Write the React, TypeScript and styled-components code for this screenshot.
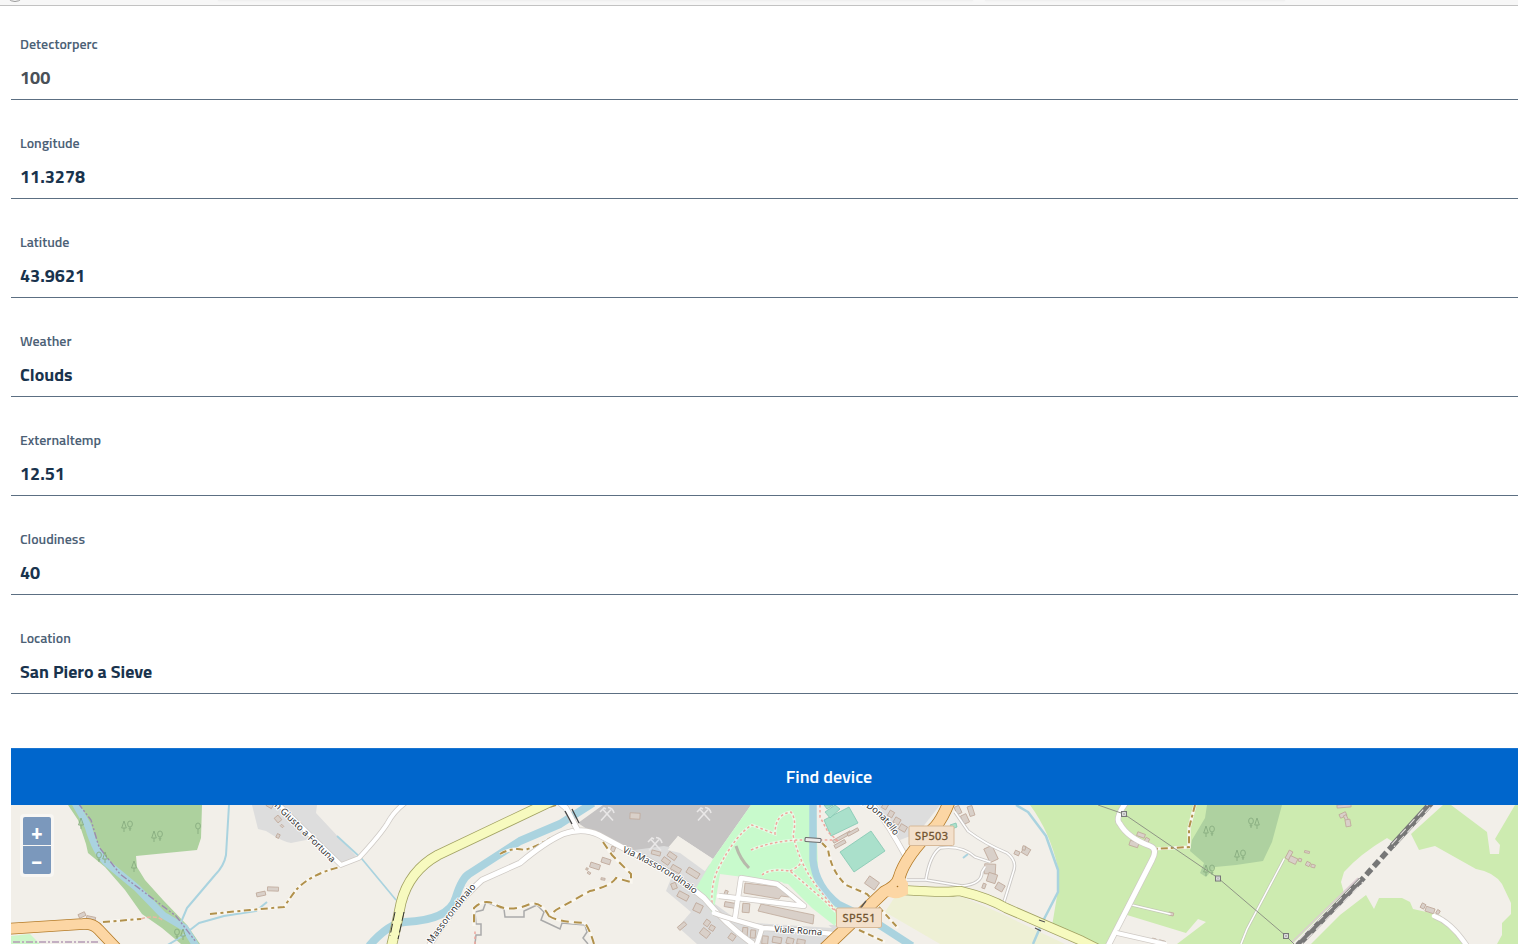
import React from "react";
import styled, { createGlobalStyle } from "styled-components";

const GlobalStyle = createGlobalStyle`
  *, *::before, *::after { box-sizing: border-box; }
  html, body { margin: 0; padding: 0; background: #fff; }
  body { height: 944px; overflow: hidden; font-family: "Titillium Web", "Noto Sans", sans-serif; }
`;

const Screen = styled.div`
  display: flex;
  flex-direction: column;
  height: 944px;
  overflow: hidden;
`;

const BrowserEdge = styled.header`
  display: flex;
  flex: none;
  height: 6px;
  background: #f7f7f7;
  border-bottom: 1px solid #c2c2c2;
  padding-left: 5px;
  overflow: hidden;
`;

const EdgeCircle = styled.span`
  width: 20px;
  height: 20px;
  margin-top: -18px;
  border: 1px solid #999;
  border-radius: 50%;
`;

const EdgeField = styled.span<{ $width: number; $gap: number }>`
  width: ${(p) => p.$width}px;
  height: 1px;
  margin-left: ${(p) => p.$gap}px;
  background: #f0f0f0;
  box-shadow: 0 0 2px #ececec;
`;

const Form = styled.main`
  display: flex;
  flex-direction: column;
  flex: 1;
  min-height: 0;
  padding-left: 11px;
`;

const Field = styled.div`
  display: flex;
  flex-direction: column;
  justify-content: flex-end;
  flex: none;
  height: 99px;
  border-bottom: 1px solid #5c6f82;
  padding: 0 9px 9px;
  &:first-child { height: 94px; }
`;

const Label = styled.label`
  font-size: 14px;
  line-height: 20px;
  font-weight: 600;
  color: #4c6176;
  margin-bottom: 12px;
`;

const Value = styled.div<{ $muted?: boolean }>`
  font-size: 18px;
  line-height: 24px;
  font-weight: 700;
  color: ${(p) => (p.$muted ? "#495057" : "#19334d")};
`;

const FindButton = styled.button`
  flex: none;
  height: 57px;
  margin-top: 54px;
  padding: 0 0 0 129px;
  border: 0;
  border-top: 1px solid #1a75d1;
  background: #0066cc;
  color: #fff;
  font: 600 18px/24px "Titillium Web", "Noto Sans", sans-serif;
`;

const MapFrame = styled.section`
  position: relative;
  flex: none;
  height: 139px;
  overflow: hidden;
  background: #f2efe9;
  svg { display: block; }
`;

const ZoomControl = styled.div`
  position: absolute;
  top: 9px;
  left: 9px;
  display: flex;
  flex-direction: column;
  gap: 1px;
  padding: 3px;
  border-radius: 4px;
  background: rgba(255, 255, 255, 0.45);
`;

const ZoomButton = styled.button<{ $end: "top" | "bottom" }>`
  display: flex;
  align-items: center;
  justify-content: center;
  width: 28px;
  height: 28px;
  padding: 0;
  border: 0;
  border-radius: ${(p) => (p.$end === "top" ? "2px 2px 0 0" : "0 0 2px 2px")};
  background: #7b98bc;
  color: #fff;
  font: 700 21px/20px "Titillium Web", "Noto Sans", sans-serif;
`;

const fields = [
  { label: "Detectorperc", value: "100", muted: true },
  { label: "Longitude", value: "11.3278" },
  { label: "Latitude", value: "43.9621" },
  { label: "Weather", value: "Clouds" },
  { label: "Externaltemp", value: "12.51" },
  { label: "Cloudiness", value: "40" },
  { label: "Location", value: "San Piero a Sieve" },
];

type RoadProps = { d: string; w: number; fill?: string; edge?: string; edgeWidth?: number };

const Road = ({ d, w, fill = "#fff", edge = "#cfcac5", edgeWidth = 1.4 }: RoadProps) => (
  <g fill="none" strokeLinejoin="round">
    <path d={d} stroke={edge} strokeWidth={w + edgeWidth} />
    <path d={d} stroke={fill} strokeWidth={w} strokeLinecap="round" />
  </g>
);

const Track = ({ d, dash = "7 3.5 3 3.5" }: { d: string; dash?: string }) => (
  <g fill="none">
    <path d={d} stroke="#faf7f0" strokeWidth="3.2" />
    <path d={d} stroke="#b1914c" strokeWidth="2" strokeDasharray={dash} />
  </g>
);

const Trees = ({ x, y, flip }: { x: number; y: number; flip?: boolean }) => (
  <g
    transform={`translate(${x} ${y})${flip ? " scale(-1 1)" : ""}`}
    fill="none"
    stroke="#88ad80"
    strokeWidth="0.9"
  >
    <path d="M-3 -5 L-5.3 2 H-0.7 Z M-3 2 V6" />
    <ellipse cx="3" cy="-2" rx="2.4" ry="3" />
    <path d="M3 1 V5 M1.6 2.3 L3 3.2 L4.4 2.3" />
  </g>
);

const Hammers = ({ x, y }: { x: number; y: number }) => (
  <g transform={`translate(${x} ${y})`} fill="none" stroke="#e9e7e7" strokeWidth="1.6">
    <path d="M-6 6.5 L4 -4.5 M6 6.5 L-4 -4.5" />
    <path d="M-7 -2 L-3 -6 L-1 -5 M1 -6.5 Q6 -6 7 -1" />
  </g>
);

const Pylon = ({ x, y }: { x: number; y: number }) => (
  <g transform={`translate(${x} ${y})`}>
    <rect x="-2.5" y="-2.5" width="5" height="5" fill="#ddd" stroke="#777" />
    <path d="M-1.5 -1.5 L1.5 1.5 M1.5 -1.5 L-1.5 1.5" stroke="#999" strokeWidth="0.5" />
  </g>
);

const Shield = ({ x, y, text }: { x: number; y: number; text: string }) => (
  <g>
    <rect x={x} y={y} width="45" height="19.5" rx="1.5" fill="#f3e0cb" stroke="#d7b998" />
    <text
      x={x + 22.5}
      y={y + 13.9}
      textAnchor="middle"
      fontSize="11"
      textLength="33"
      fill="#70532f"
      stroke="#70532f"
      strokeWidth="0.3"
    >
      {text}
    </text>
  </g>
);

/* x, y, width, height, rotation */
const buildings: [number, number, number, number, number][] = [
  [278, 819, 6, 5, 50], [282, 826, 3, 2, 45], [278, 836, 3, 4, 25], [270, 805, 6, 5, 30],
  [261, 894, 9, 4, -12], [273, 889, 11, 4, 2], [82, 915, 7, 4, -25], [91, 918, 9, 3, 12],
  [635, 816, 10, 6, 3], [595, 866, 10, 5, 18], [606, 861, 9, 5, 18], [589, 873, 3, 2, 30],
  [587, 869, 2, 2, 20], [603, 879, 4, 2, 10], [613, 849, 4, 5, 20],
  [656, 853, 9, 4, 15], [672, 856, 9, 5, 35], [666, 861, 8, 5, 35], [676, 869, 10, 5, 30],
  [693, 873, 13, 6, 32], [674, 886, 5, 6, -20], [683, 896, 11, 6, 28], [698, 908, 8, 8, 25],
  [682, 926, 9, 4, -40], [707, 923, 5, 6, 35], [705, 933, 9, 7, 38], [712, 928, 5, 5, 30],
  [746, 908, 7, 9, 5], [730, 905, 11, 5, 10], [726, 893, 3, 5, 20],
  [745, 932, 5, 9, 5], [753, 934, 5, 8, 5], [777, 940, 9, 6, 10], [790, 941, 7, 6, 15],
  [801, 942, 8, 5, 10], [765, 940, 6, 8, 5], [732, 937, 6, 6, 35],
  [885, 806, 5, 6, 30], [891, 814, 5, 6, 30], [897, 821, 6, 6, 30], [903, 828, 7, 6, 30],
  [842, 837, 20, 3, -29], [840, 844, 12, 3.5, -29], [853, 832, 12, 3, -29],
  [872, 883, 12, 9, 35], [958, 810, 5, 8, -25], [965, 819, 6, 9, -25], [971, 811, 5, 10, -18],
  [991, 854, 9, 15, -25], [990, 869, 11, 10, 3], [992, 878, 9, 9, 18], [984, 886, 3, 5, 20],
  [1000, 887, 8, 7, 30], [1017, 853, 5, 4, 25], [1026, 851, 7, 7, 30], [1024, 848, 3, 4, 15],
  [1141, 835, 8, 4, 20], [1134, 844, 9, 5, 18], [1147, 840, 4, 4, 30], [1171, 914, 5, 3, 12],
  [1289, 855, 4, 9, 28], [1293, 860, 8, 6, 25], [1300, 860, 3, 3, 15], [1307, 852, 5, 2, 12],
  [1308, 864, 4, 4, 25], [1313, 866, 4, 3, 15], [1343, 815, 7, 4, -25], [1346, 818, 3, 6, -25],
  [1348, 823, 5, 7, -10], [1344, 806, 14, 3, -5], [1423, 906, 4, 5, 28], [1430, 910, 9, 5, 18],
  [1438, 912, 3, 4, 30], [1154, 940, 4, 3, 15], [1162, 942, 6, 3, 15],
];

const ORANGE = "#fcd6a4";
const YELLOW = "#f7fabf";

const MapDrawing = () => (
  <svg
    width="1507"
    height="139"
    viewBox="11 805 1507 139"
    fontFamily='"Noto Sans", sans-serif'
    role="img"
    aria-label="Map"
  >
    <defs>
      <path id="fortuna" d="M274 806 L336 867" />
      <path id="masso-west" d="M426 953 Q445 924 471 893 L482 880" />
      <path id="masso-east" d="M622 852 Q665 870 702 900" />
      <path id="donatello" d="M857 803 Q880 811 898 842" />
    </defs>

    {/* land cover */}
    <path fill="#add19e" d="M68 805 L78 820 L86 844 L88 853 L105 867 L125 890 L142 914 L162 928 L181 944 H200 L187 925 L163 900 L145 880 L137 867 L136 856 L197 850 L201 838 L202 805Z" />
    <path fill="#cdf7c9" d="M11 936 L30 934 L40 944 H11Z" />
    <path fill="#dddddd" d="M252 805 L258 829 L266 831 Q283 842 291 843 L311 839 L342 865 L358 858 L316 813 L317 805Z" />
    <path fill="#c5c3c3" d="M603 805 L578 823 L590 831 L627 850 L666 850 L678 836 L713 859 L751 805Z" />
    <path fill="#dcdcdc" d="M627 851 L664 846 L684 850 L723 872 L718 888 L740 915 L800 925 L845 925 L830 944 H697 L678 927 L691 912 L666 891 L672 876Z" />
    <path fill="#f2efe9" d="M678 836 L713 859 L699 880 L684 858 L667 851Z" />
    <path fill="#dcdcdc" d="M664 849 L680 853 L706 872 L697 890 L672 876Z" />
    <path fill="#c8facc" d="M751 805 H816 L818 872 Q819 890 839 911 L835 926 L812 908 L788 884 L722 875 L713 914 L696 888 L713 859Z" />
    <path fill="#f2efe9" d="M720 874 L782 882 L807 907 L832 928 L740 922 L715 904Z" />
    <path fill="#dddddd" d="M878 805 H940 L918 833 L900 840Z" />
    <path fill="#eef0d5" d="M896 895 L960 896 L1000 913 L1065 944 H940 L885 912Z" />
    <path fill="#cdebb0" d="M1030 805 H1518 V944 H1090 L1052 926 L1058 890 V868 Q1050 832 1030 805Z" />
    <path fill="#f2efe9" d="M1430 805 H1443 L1411 834 L1419 850 L1435 846 L1476 869 Q1494 872 1502 884 L1511 903 V914 L1502 923 V935 L1497 944 H1467 L1440 915 L1413 909 L1410 902 L1402 898 H1379 L1374 909 L1366 895 L1340 915 L1311 944 H1292 L1344 893 L1341 882 L1344 872 Q1360 854 1387 838 L1395 843Z" />
    <path fill="#f2efe9" d="M1451 805 L1487 832 L1490 854 H1499 L1500 845 L1495 839 L1515 805Z" />
    <path fill="#f2efe9" d="M1127 915 L1186 933 L1198 919 L1206 922 L1177 944 H1112 L1116 928Z" />
    <path fill="#aed1a0" d="M1207 805 H1282 L1272 842 L1263 861 L1236 865 L1215 867 L1206 877 L1200 873 L1204 863 L1190 851 L1192 840 L1205 818Z" />

    {/* water */}
    <g fill="none" stroke="#aad3df" strokeLinejoin="round">
      <path strokeWidth="7" d="M75 803 L88 826 Q96 854 108 864 L137 888 L163 915 L185 928 L196 946" />
      <path strokeWidth="2" d="M229 805 L226 855 Q224 866 215 875 L187 908 L179 927" />
      <path strokeWidth="2" d="M267 902 L256 911 L224 916 L199 923 L181 937 L166 946" />
      <path strokeWidth="1.7" d="M337 836 L362 859 L396 900" />
      <path strokeWidth="8" d="M369 946 Q389 923 405 922 Q450 920 456 897 Q462 878 469 874 L520 841 L560 824 L593 803" />
      <path strokeWidth="7.5" d="M813 803 L813 860 Q816 887 838 904 L875 922 L912 946" />
      <path strokeWidth="2.5" d="M1016 805 L1028 812 L1046 836 L1058 870 V892 L1042 923 L1033 944" />
      <path strokeWidth="2" d="M963 858 L968 854" />
    </g>
    <path d="M78 803 L91 820 L99 847 L120 874 L144 892 L176 916 L196 942" fill="none" stroke="#9c8bb0" strokeWidth="1.4" strokeDasharray="7 2 2 2 2 2" />
    <path d="M13 942 H100" fill="none" stroke="#b49bb5" strokeWidth="1.4" strokeDasharray="7 2 2 2" />

    {/* sport pitches */}
    <g fill="#aae0cb" stroke="#83c6b1" strokeWidth="0.8">
      <path d="M824 820 L849 807 L858 823 L831 836Z" />
      <path d="M840 852 L871 831 L885 851 L854 872Z" />
      <path d="M825 812 L835 805 L840 809 L830 818Z M824 805 H833 L827 809Z M950 825 L956 823 L957 827 L952 829Z" />
    </g>

    <g fill="#d9d0c9" stroke="#bfa99a" strokeWidth="0.8">
      {buildings.map(([x, y, w, h, r], i) => (
        <rect key={i} x={x - w / 2} y={y - h / 2} width={w} height={h} transform={`rotate(${r} ${x} ${y})`} />
      ))}
      <path d="M745 883 L787 888 L789 897 L781 896 L779 899 L744 893Z" />
      <path d="M761 904 L814 915 L813 924 L758 911Z" />
    </g>
    <path d="M736 846 Q740 859 749 868" fill="none" stroke="#b7b9ab" strokeWidth="3" />

    <g fill="none" stroke="#aaa" strokeWidth="1.5">
      <path d="M475 944 L476 935 H481 V924 H476 L475 912 L483 910 L486 902 L504 909 L505 917 H524 V911 L537 905 L544 912 L541 920 L560 929 L562 923 L585 925 L587 932 L583 938 L588 944" />
    </g>

    {/* footpaths and tracks */}
    <g fill="none" stroke="#fff" strokeOpacity="0.5" strokeWidth="3">
      <path d="M712 903 Q711 884 718 869 Q736 834 752 825 L775 834 Q775 814 791 812 Q797 820 793 835 Q800 864 815 884 L836 911" />
      <path d="M751 850 Q775 840 803 840 M762 875 Q770 868 790 871 L824 900 L836 912 M790 871 Q801 866 801 861" />
    </g>
    <g fill="none" stroke="#efa79d" strokeWidth="1.5" strokeDasharray="2.6 2.4">
      <path d="M712 903 Q711 884 718 869 Q736 834 752 825 L775 834 Q775 814 791 812 Q797 820 793 835 Q800 864 815 884 L836 911" />
      <path d="M751 850 Q775 840 803 840 H838 M762 875 Q770 868 790 871 L824 900 L836 912 M790 871 Q801 866 801 861 M820 805 V817 L828 832 L839 842" />
      <path d="M475 944 V929" />
    </g>
    <Track d="M103 922 L141 919" />
    <path d="M141 919 Q155 914 164 921" fill="none" stroke="#e9b6a5" strokeWidth="1.6" strokeDasharray="4 2" />
    <Track d="M210 914 L250 910 L284 907 Q292 895 297 889 Q311 874 340 867" />
    <Track d="M500 854 Q512 847 525 850 Q540 845 550 838 M534 812 L556 805" />
    <Track dash="8 5" d="M603 842 L612 855 L631 874 V882 L616 878 Q611 886 590 891 L556 910 L549 916 Q541 901 530 904 Q512 912 498 906 Q485 897 474 908 L474 926" />
    <Track dash="8 5" d="M549 916 Q558 922 585 923 Q590 930 594 944" />
    <Track dash="6 4" d="M822 843 L828 849 Q831 871 846 885 L867 894 L898 928 M859 930 L885 942" />
    <Track dash="7 3 3 3" d="M1195 805 L1189 828 V847 L1154 849" />

    {/* minor roads */}
    <Road w={1.6} edgeWidth={1.8} edge="#cbc8c5" d="M955 812 L968 831 Q985 844 1007 853 Q1018 861 1013 873 L1004 902" />
    <Road w={1.6} edgeWidth={1.8} edge="#cbc8c5" d="M907 880 H926 L962 886 Q982 884 982 872 L985 867 M990 862 L975 857 Q962 845 940 848 Q930 855 926 879" />
    <Road w={1.5} edge="#c5c9b8" d="M1132 905 L1170 914" />
    <Road w={1.5} edge="#c5c9b8" d="M1284 859 L1247 929 L1241 944" />
    <Road w={4} d="M273 799 L341 865 L359 858 Q380 835 387 824 Q394 811 405 803" />
    <Road w={5} d="M429 946 Q455 904 482 880 L520 863 Q545 842 563 834 Q583 827 599 835 L627 850 Q670 869 704 898 Q729 928 756 946" />
    <Road w={5} d="M560 803 L566 808 L577 829" />
    <path d="M565 811 L572 824 M572 809 L579 823" stroke="#444" strokeWidth="1.3" />
    <Road w={4.5} d="M714 913 Q724 917 763 928 Q800 930 833 934 M762 928 L757 944 M735 918 L741 878 L777 884 Q783 888 804 906 L719 896" />
    <Road w={4.5} d="M873 805 Q888 824 906 857" />
    <Road w={5} d="M1127 801 Q1114 819 1120 824 Q1128 838 1150 846 Q1158 849 1152 860 L1108 946" />
    <Road w={4} d="M1117 933 L1165 944" />
    <Road w={4.5} d="M1434 916 Q1451 922 1467 946" />

    {/* main roads */}
    <Road w={9} edgeWidth={1.6} edge="#a2a263" fill={YELLOW} d="M391 948 Q397 924 401 903 Q409 871 438 855 L556 799" />
    <path d="M395 912 L390 936 M404 912 L398 939" stroke="#333" strokeWidth="1" strokeDasharray="9 3" />
    <Road w={8.5} edgeWidth={1.6} edge="#a2a263" fill={YELLOW} d="M902 890 Q945 893 960 891 Q989 898 1006 908 L1082 941 L1100 950" />
    <Road w={10} edgeWidth={1.6} edge="#b47b28" fill={ORANGE} d="M5 929 L83 924 Q93 923 99 930 L118 950" />
    <Road w={11} edgeWidth={1.6} edge="#b47b28" fill={ORANGE} d="M951 797 Q944 816 936 826 Q905 856 899 878 Q897 886 884 892 L823 950" />
    <path fill={ORANGE} d="M898 872 L903 873 Q905 879 908 883 V894 Q901 899 893 898 L886 896Z" />
    <circle cx="897.5" cy="886.5" r="0.8" fill="#a66d20" />
    <path d="M866 901 L860 909 M1039 920 L1045 922 M1035 928 L1041 931" stroke="#555" strokeWidth="1.3" />
    <rect x="805" y="838" width="16" height="4" rx="1" fill="#ebeaea" stroke="#6b6b6b" transform="rotate(4 813 840)" />

    {/* railway */}
    <g fill="none">
      <path d="M1433 801 L1392 846" stroke="#777" strokeWidth="6" />
      <path d="M1361 880 L1297 946" stroke="#777" strokeWidth="6" />
      <path d="M1394 844 L1358 884" stroke="#777" strokeWidth="5.5" strokeDasharray="7.5 3.8" />
      <path d="M1432 800 L1391 845 M1360 879 L1295 944" stroke="#e4e1dd" strokeWidth="1.1" strokeDasharray="8 5" />
      <path d="M1435 802 L1394 847 M1363 882 L1299 947" stroke="#e4e1dd" strokeWidth="1.1" strokeDasharray="8 5" strokeDashoffset="6" />
      <path d="M1358 878 L1292 942" stroke="#dccbd2" strokeWidth="1.2" />
    </g>

    {/* power line */}
    <path d="M1098 805 L1124 814 L1218 878 L1286 936 L1294 944" fill="none" stroke="#8f9585" strokeWidth="1" />
    <Pylon x={1124} y={814} />
    <Pylon x={1218} y={878.5} />
    <Pylon x={1286} y={936} />

    {/* symbols */}
    <Trees x={127} y={826} />
    <Trees x={157} y={836} />
    <Trees x={102} y={857} flip />
    <Trees x={180} y={934} flip />
    <Trees x={1209} y={831} />
    <Trees x={1254} y={823} flip />
    <Trees x={1240} y={855} />
    <Trees x={1209} y={870} />
    <g fill="none" stroke="#88ad80" strokeWidth="0.9">
      <path d="M134 861 L131.5 868 H136.5 Z M134 868 V872 M81 818 L78.5 825 H83.5 Z M81 825 V829" />
      <ellipse cx="198" cy="826" rx="2.4" ry="3" />
      <path d="M198 829 V834" />
    </g>
    <Hammers x={607} y={814} />
    <Hammers x={704} y={814} />
    <Hammers x={655} y={844} />

    <g fontSize="9.3" fill="#333" stroke="#fff" strokeWidth="2" strokeLinejoin="round" paintOrder="stroke">
      <text><textPath href="#fortuna" textLength="81">n Giusto a Fortuna</textPath></text>
      <text><textPath href="#masso-west" startOffset="3" textLength="80">a Massorondinaio</textPath></text>
      <text><textPath href="#masso-east" textLength="84">Via Massorondinaio</textPath></text>
      <text><textPath href="#donatello" textLength="51">ia Donatello</textPath></text>
      <text x="774" y="932" textLength="48" transform="rotate(4 774 932)">Viale Roma</text>
    </g>
    <Shield x={909} y={826} text="SP503" />
    <Shield x={836.5} y={908} text="SP551" />
  </svg>
);

export default function App() {
  return (
    <Screen>
      <GlobalStyle />
      <BrowserEdge>
        <EdgeCircle />
        <EdgeField $gap={193} $width={755} />
        <EdgeField $gap={12} $width={300} />
      </BrowserEdge>
      <Form>
        {fields.map((f) => (
          <Field key={f.label}>
            <Label>{f.label}</Label>
            <Value $muted={f.muted}>{f.value}</Value>
          </Field>
        ))}
        <FindButton type="button">Find device</FindButton>
        <MapFrame>
          <MapDrawing />
          <ZoomControl>
            <ZoomButton type="button" $end="top">+</ZoomButton>
            <ZoomButton type="button" $end="bottom">−</ZoomButton>
          </ZoomControl>
        </MapFrame>
      </Form>
    </Screen>
  );
}
